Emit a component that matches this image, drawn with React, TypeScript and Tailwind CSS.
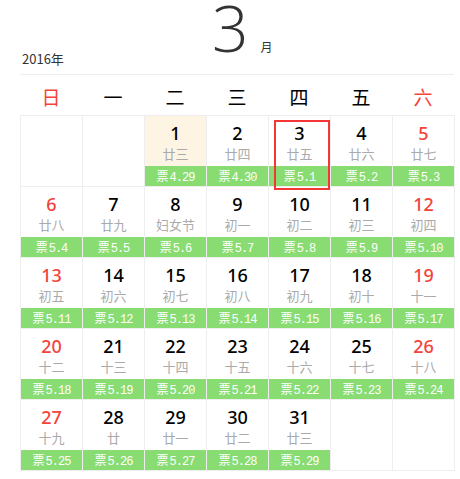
import React from 'react';

const lunar = [
    '廿三', '廿四', '廿五', '廿六', '廿七', '廿八', '廿九', '妇女节', '初一', '初二',
    '初三', '初四', '初五', '初六', '初七', '初八', '初九', '初十', '十一', '十二',
    '十三', '十四', '十五', '十六', '十七', '十八', '十九', '廿', '廿一', '廿二', '廿三'
];

const weekdays = ['日', '一', '二', '三', '四', '五', '六'];

const ticket = (d: number) => (d === 1 ? '4.29' : d === 2 ? '4.30' : `5.${d - 2}`);

const App: React.FC = () => {
    const cells: (number | null)[] = [null, null];
    for (let d = 1; d <= 31; d++) cells.push(d);
    while (cells.length % 7) cells.push(null);

    return (
        <div className="w-[460px] h-[479px] bg-white pl-[20px] pr-[6px] font-['Noto_Sans','Noto_Sans_CJK_SC',sans-serif]">
            {/* Header */}
            <div className="h-[75px] border-b border-[#eeeeee] flex items-start">
                <span className="ml-[2px] mt-[51px] text-[13px] leading-[16px] text-[#333] font-['Noto_Sans_CJK_SC',sans-serif]">2016年</span>
                <span className="ml-[148px] mt-[1px] text-[64px] leading-[54px] font-light text-[#333] font-['Open_Sans',sans-serif]">3</span>
                <span className="ml-[12px] mt-[40px] text-[12px] leading-[14px] text-[#333] font-['Noto_Sans_CJK_SC',sans-serif]">月</span>
            </div>

            {/* Weekdays */}
            <div className="grid grid-cols-7 h-[40px] items-center">
                {weekdays.map((w, i) => (
                    <div
                        key={w}
                        className={`text-center text-[19px] pt-[4px] font-['Noto_Sans_CJK_SC',sans-serif] ${i === 0 || i === 6 ? 'text-[#f4433b]' : 'text-black'}`}
                    >
                        {w}
                    </div>
                ))}
            </div>

            {/* Days */}
            <div className="relative grid grid-cols-7 border-l border-t border-[#eeeeee] w-[435px]">
                {cells.map((d, i) => {
                    const weekend = i % 7 === 0 || i % 7 === 6;
                    return (
                        <div
                            key={i}
                            className={`h-[71px] border-r border-b border-[#eeeeee] flex flex-col items-center ${d === 1 ? 'bg-[#fdf4e3]' : 'bg-white'}`}
                        >
                            {d && (
                                <>
                                    <div className={`mt-[6px] h-[22px] leading-[22px] text-[18px] font-medium ${weekend ? 'text-[#f4433b]' : 'text-black'}`}>
                                        {d}
                                    </div>
                                    <div className="h-[20px] leading-[20px] text-[13px] text-[#aaaaaa] font-['Noto_Sans_CJK_SC',sans-serif]">
                                        {lunar[d - 1]}
                                    </div>
                                    <div className="mt-auto w-full h-[20px] leading-[20px] bg-[#88dc72] text-white text-[12px] text-center font-['Noto_Sans_CJK_SC',sans-serif]">
                                        票<span className="ml-[1px] font-['Liberation_Mono',monospace] tracking-[-1px]">{ticket(d)}</span>
                                    </div>
                                </>
                            )}
                        </div>
                    );
                })}
                {/* Today marker */}
                <div className="absolute left-[253px] top-[4px] w-[56px] h-[70px] border-2 border-[#f33636] pointer-events-none" />
            </div>
        </div>
    );
};

export default App;
